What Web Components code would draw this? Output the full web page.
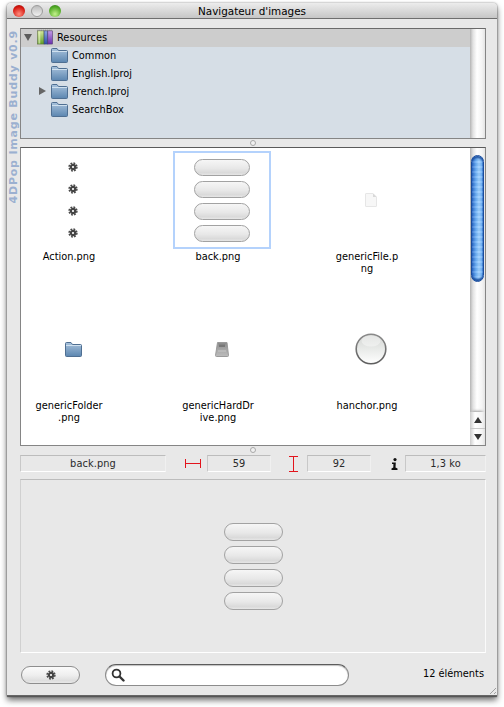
<!DOCTYPE html>
<html lang="fr">
<head>
<meta charset="utf-8">
<title>Navigateur d'images</title>
<style>
  html, body { margin: 0; background: #fff; }
  body { font: 9.8px "DejaVu Sans", sans-serif; color: #000; min-height: 707px; }
</style>
</head>
<body>
<image-browser></image-browser>
<script>
const GEAR = `<svg width="10" height="10" viewBox="0 0 12 12">
  <circle cx="6" cy="6" r="4.700" fill="none" stroke="#4a4a4a" stroke-width="1.800" stroke-dasharray="2.200 1.490"/>
  <circle cx="6" cy="6" r="2.600" fill="none" stroke="#444" stroke-width="2.600"/>
  <circle cx="6" cy="6" r="1.200" fill="#ddd"/>
  </svg>`;

const ICONS = {
  gear: GEAR,
  folder: `<svg width="17" height="15" viewBox="0 0 17 15">
    <defs><linearGradient id="f" x1="0" y1="0" x2="0" y2="1">
      <stop offset="0" stop-color="#a8c2dc"/><stop offset="1" stop-color="#5c86b0"/></linearGradient></defs>
    <path d="M.5 13.5V1.5Q.5.5 1.5.5H6L7.5 2.500H15.500Q16.500 2.500 16.500 3.500V13.500Q16.500 14.500 15.500 14.500H1.500Q.5 14.500 .5 13.500Z" fill="url(#f)" stroke="#4f6f92"/>
    <path d="M1 3.500H16" stroke="#cfe0ee"/>
    </svg>`,
  books: `<svg width="16" height="16" viewBox="0 0 17 16">
    <defs>
      <linearGradient id="g" x1="0" y1="0" x2="0" y2="1"><stop offset="0" stop-color="#d4e89a"/><stop offset="1" stop-color="#5f9e24"/></linearGradient>
      <linearGradient id="b" x1="0" y1="0" x2="0" y2="1"><stop offset="0" stop-color="#8aa6e4"/><stop offset="1" stop-color="#2c4fa8"/></linearGradient>
      <linearGradient id="p" x1="0" y1="0" x2="0" y2="1"><stop offset="0" stop-color="#c29ae6"/><stop offset="1" stop-color="#6a2fae"/></linearGradient>
    </defs>
    <rect x=".5" y="1.500" width="7" height="14" fill="url(#g)" stroke="#5c6b40" stroke-width=".6"/>
    <rect x="1.500" y="2" width="2" height="13" fill="#eef5d0" opacity=".6"/>
    <rect x="7.500" y="1.500" width="4" height="14" fill="url(#b)" stroke="#34426a" stroke-width=".6"/>
    <rect x="11.500" y="1.500" width="5" height="14" fill="url(#p)" stroke="#4e3a6a" stroke-width=".6"/>
    <path d="M.5 .8H16.500" stroke="#777" stroke-dasharray="1 1"/>
    </svg>`,
  file: `<svg width="12" height="14" viewBox="0 0 12 14">
    <path d="M.5 1Q.5.5 1 .5H8L11.500 4V13Q11.500 13.500 11 13.500H1Q.5 13.500 .5 13Z" fill="#f7f7f7" stroke="#e6e6e6"/>
    <path d="M8 .5V4H11.500Z" fill="#d8d8d8"/>
    </svg>`,
  drive: `<svg width="14" height="15" viewBox="0 0 14 15">
    <defs><linearGradient id="d" x1="0" y1="0" x2="0" y2="1">
      <stop offset="0" stop-color="#8a8a8a"/><stop offset=".45" stop-color="#a4a4a4"/><stop offset="1" stop-color="#bcbcbc"/></linearGradient></defs>
    <path d="M2.500.5H12L13.500 13.500Q13.500 14.500 12.500 14.500H1.500Q.5 14.500.5 13.500Z" fill="url(#d)" stroke="#9a9a9a"/>
    <path d="M4 2.500H10V5H4Z" fill="#777"/>
    <path d="M3 9H11" stroke="#c8c8c8"/>
    </svg>`,
  sphere: `<svg width="32" height="32" viewBox="0 0 32 32">
    <defs><linearGradient id="s" x1="0" y1="0" x2="0" y2="1">
      <stop offset="0" stop-color="#d2d4d2"/><stop offset=".5" stop-color="#e8eae8"/><stop offset="1" stop-color="#fff"/></linearGradient>
      <linearGradient id="r" x1="0" y1="0" x2="0" y2="1">
      <stop offset="0" stop-color="#8a8a8a"/><stop offset="1" stop-color="#5e5e5e"/></linearGradient></defs>
    <circle cx="16" cy="16" r="14.800" fill="url(#s)" stroke="url(#r)" stroke-width="1.600"/>
    <ellipse cx="16" cy="8" rx="9.500" ry="5.500" fill="#fff" opacity=".4"/>
    </svg>`,
  width: `<svg width="16" height="9" viewBox="0 0 16 9"><path d="M.5 0V9M15.500 0V9M0 4.500H16" stroke="#e2141c"/></svg>`,
  height: `<svg width="9" height="16" viewBox="0 0 9 16"><path d="M0 .5H9M0 15.500H9M4.500 0V16" stroke="#e2141c"/></svg>`,
  info: `<svg width="7" height="12" viewBox="0 0 7 12"><circle cx="4" cy="1.600" r="1.600" fill="#111"/>
    <path d="M1 4.500H4.800L4.500 9.500L6.500 10.500V12H.5V10.500L2.300 9.500L2.400 6H1Z" fill="#111"/></svg>`,
  search: `<svg width="14" height="14" viewBox="0 0 14 14"><circle cx="5.500" cy="5.500" r="3.900" fill="#fff" stroke="#333" stroke-width="1.800"/>
    <path d="M8.500 8.500L12.500 12.500" stroke="#333" stroke-width="2.400" stroke-linecap="round"/></svg>`,
};

class MacIcon extends HTMLElement {
  connectedCallback() {
    if (!this.shadowRoot) this.attachShadow({ mode: 'open' });
    this.shadowRoot.innerHTML = `<style>
      :host { display: inline-flex; align-items: center; justify-content: center; line-height: 0; }
    </style>${ICONS[this.getAttribute('name')] || ''}`;
  }
}
customElements.define('mac-icon', MacIcon);

class TitleBar extends HTMLElement {
  constructor() {
    super();
    this.attachShadow({ mode: 'open' }).innerHTML = `<style>
      :host {
        display: flex; align-items: center; justify-content: center; position: relative;
        height: 15px; border-bottom: 1px solid #6e6e6e;
        background: linear-gradient(#ececec, #c6c6c6);
        border-radius: 4px 4px 0 0;
        font-size: 10.4px; color: #000;
      }
      .lights { position: absolute; left: 6px; top: 2px; display: flex; gap: 6px; }
      i { display: block; width: 12px; height: 12px; border-radius: 50%; box-sizing: border-box; }
      .red { background: radial-gradient(circle at 50% 75%, #ff8d7e, #d5170f 65%, #8c0e0a); }
      .off { background: linear-gradient(#bcbcbc, #f0f0f0); border: 1px solid #9c9c9c; }
      .green { background: radial-gradient(circle at 50% 75%, #c4f28c, #4fa824 65%, #2a6e12); }
    </style>
    <div class="lights"><i class="red"></i><i class="off"></i><i class="green"></i></div>
    <span><slot></slot></span>`;
  }
}
customElements.define('title-bar', TitleBar);

class ScrollTrack extends HTMLElement {
  constructor() {
    super();
    this.attachShadow({ mode: 'open' }).innerHTML = `<style>
      :host {
        display: block; box-sizing: border-box; width: 15px; height: 100%;
        position: relative; overflow: hidden;
        background: linear-gradient(90deg, #b4b4b4, #e2e2e2 3px, #fff 7px, #f4f4f4 12px, #e4e4e4);
      }
      .thumb {
        position: absolute; left: 1px; top: 7px; width: 13px; height: 127px;
        box-sizing: border-box; border-radius: 7px;
        border: 1px solid #1a4c9c;
        background:
          repeating-linear-gradient(rgba(255,255,255,.12) 0 2px, rgba(0,0,0,.03) 2px 5px),
          linear-gradient(90deg, #2a68c8, #6cb0f6 4px, #9ed0ff 7px, #6cb0f6 10px, #2a68c8);
        box-shadow: inset 0 3px 2px -1px #1c4f9e, inset 0 -3px 2px -1px #1c4f9e;
      }
      .end {
        position: absolute; left: 0; right: 0; bottom: 0; height: 33px;
        background: #f2f2f2; box-shadow: 0 -3px 3px -2px #999;
        border-radius: 7px 7px 0 0 / 3px 3px 0 0;
      }
      .btn {
        height: 16px; box-sizing: border-box; display: flex; align-items: center; justify-content: center;
        background: linear-gradient(90deg, #ccc, #fff 5px, #f4f4f4 12px, #e2e2e2);
      }
      .btn + .btn { border-top: 1px solid #c8c8c8; height: 17px; }
      .up { width: 0; height: 0; border: 4px solid transparent; border-top: 0; border-bottom: 6px solid #333; }
      .down { width: 0; height: 0; border: 4px solid transparent; border-bottom: 0; border-top: 6px solid #333; }
    </style>`;
  }
  connectedCallback() {
    if (this.hasAttribute('active') && !this.shadowRoot.querySelector('.thumb')) {
      this.shadowRoot.innerHTML += `<div class="thumb"></div>
        <div class="end"><div class="btn"><div class="up"></div></div><div class="btn"><div class="down"></div></div></div>`;
    }
  }
}
customElements.define('scroll-track', ScrollTrack);

class TreeRow extends HTMLElement {
  constructor() {
    super();
    this.attachShadow({ mode: 'open' }).innerHTML = `<style>
      :host {
        display: flex; align-items: center; height: 18px; box-sizing: border-box; padding-bottom: 2px;
        padding-left: var(--indent, 0); gap: 4px; white-space: nowrap; color: #000;
      }
      :host([selected]) { background: #cdcdcd; }
      .arrow { width: 15px; margin-left: -15px; display: flex; justify-content: flex-start; }
      .closed { width: 0; height: 0; border: 4px solid transparent; border-right: 0; border-left: 7px solid #666; margin-left: 7px; }
      .open { width: 0; height: 0; border: 4px solid transparent; border-bottom: 0; border-top: 7px solid #5c5c5c; margin-left: 6px; }
    </style>
    <div class="arrow"></div><mac-icon></mac-icon><span><slot></slot></span>`;
  }
  connectedCallback() {
    const arrow = this.getAttribute('arrow');
    if (arrow) this.shadowRoot.querySelector('.arrow').innerHTML = `<div class="${arrow}"></div>`;
    const ic = this.shadowRoot.querySelector('mac-icon');
    ic.setAttribute('name', this.getAttribute('icon'));
    ic.connectedCallback();
  }
}
customElements.define('tree-row', TreeRow);

class TreePanel extends HTMLElement {
  constructor() {
    super();
    this.attachShadow({ mode: 'open' }).innerHTML = `<style>
      :host {
        display: flex; height: 111px; box-sizing: border-box;
        border: 1px solid #858585; border-top-color: #6a6a6a; background: #d6dee6;
      }
      .rows { flex: 1; min-width: 0; }
    </style>
    <div class="rows"><slot></slot></div><scroll-track></scroll-track>`;
  }
}
customElements.define('tree-panel', TreePanel);

class SplitDot extends HTMLElement {
  constructor() {
    super();
    this.attachShadow({ mode: 'open' }).innerHTML = `<style>
      :host { display: flex; justify-content: center; align-items: center; height: 8px; padding-right: 1px; }
      i { display: block; width: 6px; height: 6px; box-sizing: border-box; border-radius: 50%; border: 1px solid #a8a8a8; background: #f0f0f0; }
    </style><i></i>`;
  }
}
customElements.define('split-dot', SplitDot);

class PillStack extends HTMLElement {
  constructor() {
    super();
    this.attachShadow({ mode: 'open' }).innerHTML = `<style>
      :host { display: flex; flex-direction: column; align-items: center; gap: var(--gap, 5px); }
      i {
        display: block; box-sizing: border-box; width: var(--w, 56px); height: var(--h, 17px);
        border-radius: 9px; border: 1px solid #a2a2a2;
        background: linear-gradient(#f6f6f6, #e8e8e8 55%, #dadada 85%, #e6e6e6);
      }
    </style><i></i><i></i><i></i><i></i>`;
  }
}
customElements.define('pill-stack', PillStack);

class ThumbCell extends HTMLElement {
  constructor() {
    super();
    this.attachShadow({ mode: 'open' }).innerHTML = `<style>
      :host { display: block; height: 149px; box-sizing: border-box; padding: 3px 0 0 3px; }
      .thumb {
        width: 98px; height: 98px; box-sizing: border-box; border: 2px solid transparent;
        display: flex; align-items: center; justify-content: center;
      }
      :host([selected]) .thumb { border-color: #b4d2fc; }
      .label { width: 90px; margin-top: 2px; text-align: center; line-height: 12px; white-space: nowrap; color: #000; }
    </style>
    <div class="thumb"><slot name="image"></slot></div>
    <div class="label"><slot></slot></div>`;
  }
}
customElements.define('thumb-cell', ThumbCell);

class ThumbGrid extends HTMLElement {
  constructor() {
    super();
    this.attachShadow({ mode: 'open' }).innerHTML = `<style>
      :host {
        display: flex; height: 299px; box-sizing: border-box; background: #fff;
        border: 1px solid #858585; border-top-color: #5a5a5a;
      }
      .cells { flex: 1; min-width: 0; overflow: hidden; display: grid; grid-template-columns: repeat(3, 149px); grid-auto-rows: 149px; align-content: start; }
    </style>
    <div class="cells"><slot></slot></div><scroll-track active></scroll-track>`;
  }
}
customElements.define('thumb-grid', ThumbGrid);

class InfoField extends HTMLElement {
  constructor() {
    super();
    this.attachShadow({ mode: 'open' }).innerHTML = `<style>
      :host {
        display: block; height: 17px; line-height: 15px; box-sizing: border-box; text-align: center;
        background: #e8e8e8; color: #2a2a2a; letter-spacing: .1px;
        border: 1px solid; border-color: #bcbcbc #f0f0f0 #fff #c8c8c8;
      }
    </style><slot></slot>`;
  }
}
customElements.define('info-field', InfoField);

class InfoBar extends HTMLElement {
  constructor() {
    super();
    this.attachShadow({ mode: 'open' }).innerHTML = `<style>
      :host {
        display: grid; align-items: center; justify-items: end; height: 17px;
        grid-template-columns: 146px 41px 64px 36px 64px 34px 81px;
      }
      ::slotted(info-field) { justify-self: stretch; }
    </style><slot></slot>`;
  }
}
customElements.define('info-bar', InfoBar);

class PreviewPane extends HTMLElement {
  constructor() {
    super();
    this.attachShadow({ mode: 'open' }).innerHTML = `<style>
      :host {
        display: flex; align-items: center; justify-content: center; box-sizing: border-box;
        height: 174px; background: #e8e8e8;
        border: 1px solid; border-color: #bcbcbc #fafafa #fff #d0d0d0;
      }
    </style><slot></slot>`;
  }
}
customElements.define('preview-pane', PreviewPane);

class ActionButton extends HTMLElement {
  constructor() {
    super();
    this.attachShadow({ mode: 'open' }).innerHTML = `<style>
      :host {
        display: flex; align-items: center; justify-content: center; box-sizing: border-box;
        width: 59px; height: 18px; border-radius: 9px; border: 1px solid #8e8e8e;
        background: linear-gradient(#fbfbfb, #efefef 50%, #dedede 85%, #e8e8e8);
      }
    </style><mac-icon name="gear"></mac-icon>`;
  }
}
customElements.define('action-button', ActionButton);

class SearchBox extends HTMLElement {
  constructor() {
    super();
    this.attachShadow({ mode: 'open' }).innerHTML = `<style>
      :host {
        display: flex; align-items: center; box-sizing: border-box; padding-left: 5px;
        width: 244px; height: 22px; border-radius: 11px; background: #fff;
        border: 1px solid #8c8c8c; border-top-color: #5c5c5c;
        box-shadow: inset 0 1px 1px rgba(0,0,0,.25);
      }
    </style><mac-icon name="search"></mac-icon>`;
  }
}
customElements.define('search-box', SearchBox);

class ImageBrowser extends HTMLElement {
  constructor() {
    super();
    this.attachShadow({ mode: 'open' }).innerHTML = `<style>
      :host { display: block; padding: 3px 7px 11px; }
      .window {
        position: relative; width: 490px; height: 693px; box-sizing: border-box;
        display: flex; flex-direction: column;
        background: #e8e8e8; border-radius: 4px 4px 0 0;
        border-bottom: 1px solid #666;
        box-shadow: 0 1px 1px #555, 0 4px 6px rgba(0,0,0,.6), 0 0 2px rgba(0,0,0,.45);
      }
      .main { flex: 1; display: grid; grid-template-columns: 13px 466px; min-height: 0; }
      .rail {
        padding-top: 11px; overflow: hidden; display: flex; justify-content: center; align-items: flex-start;
      }
      .rail span {
        writing-mode: vertical-rl; transform: rotate(180deg); white-space: nowrap;
        font: bold 11px "DejaVu Sans", sans-serif; letter-spacing: .8px; color: #9bb0d0;
      }
      .content { padding-top: 9px; display: flex; flex-direction: column; min-width: 0; }
      info-bar { margin-top: 1px; }
      info-bar [name=width] { margin-right: 6px; }
      info-bar [name=height] { margin-right: 9px; }
      info-bar [name=info] { margin-right: 7px; }
      preview-pane { margin-top: 7px; }
      .footer { display: flex; align-items: center; height: 22px; margin-top: 11px; padding-left: 1px; }
      search-box { margin-left: 25px; }
      .count { margin-left: auto; margin-right: 2px; padding-bottom: 3px; color: #000; white-space: nowrap; }
      .grip {
        position: absolute; right: 1px; bottom: 1px; width: 9px; height: 9px;
        background: repeating-linear-gradient(135deg, transparent 0 2px, #a0a0a0 2px 3px);
        clip-path: polygon(100% 0, 100% 100%, 0 100%);
      }
    </style>
    <div class="window">
      <title-bar>Navigateur d'images</title-bar>
      <div class="main">
        <div class="rail"><span>4DPop Image Buddy v0.9</span></div>
        <div class="content">
          <tree-panel>
            <tree-row selected icon="books" arrow="open" style="--indent:12px">Resources</tree-row>
            <tree-row icon="folder" style="--indent:26px">Common</tree-row>
            <tree-row icon="folder" style="--indent:26px">English.lproj</tree-row>
            <tree-row icon="folder" arrow="closed" style="--indent:26px">French.lproj</tree-row>
            <tree-row icon="folder" style="--indent:26px">SearchBox</tree-row>
          </tree-panel>
          <split-dot></split-dot>
          <thumb-grid>
            <thumb-cell><div slot="image" style="display:grid;gap:12px;line-height:0">
              <mac-icon name="gear"></mac-icon><mac-icon name="gear"></mac-icon><mac-icon name="gear"></mac-icon><mac-icon name="gear"></mac-icon>
            </div>Action.png</thumb-cell>
            <thumb-cell selected><pill-stack slot="image"></pill-stack>back.png</thumb-cell>
            <thumb-cell><mac-icon slot="image" name="file"></mac-icon>genericFile.p<br>ng</thumb-cell>
            <thumb-cell><mac-icon slot="image" name="folder"></mac-icon>genericFolder<br>.png</thumb-cell>
            <thumb-cell><mac-icon slot="image" name="drive"></mac-icon>genericHardDr<br>ive.png</thumb-cell>
            <thumb-cell><mac-icon slot="image" name="sphere"></mac-icon>hanchor.png</thumb-cell>
          </thumb-grid>
          <split-dot></split-dot>
          <info-bar>
            <info-field>back.png</info-field>
            <mac-icon name="width"></mac-icon>
            <info-field>59</info-field>
            <mac-icon name="height"></mac-icon>
            <info-field>92</info-field>
            <mac-icon name="info"></mac-icon>
            <info-field>1,3 ko</info-field>
          </info-bar>
          <preview-pane><pill-stack style="--w:59px;--h:18px;--gap:5px"></pill-stack></preview-pane>
          <div class="footer">
            <action-button></action-button>
            <search-box></search-box>
            <span class="count">12 éléments</span>
          </div>
        </div>
      </div>
      <div class="grip"></div>
    </div>`;
  }
}
customElements.define('image-browser', ImageBrowser);
</script>
</body>
</html>
